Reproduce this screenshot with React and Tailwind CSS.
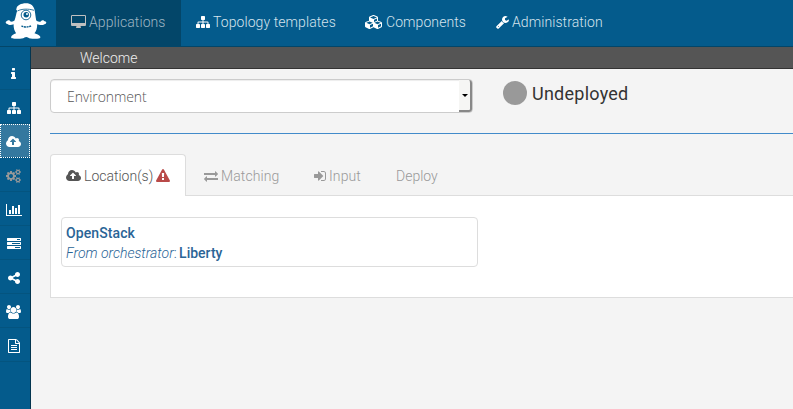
const GLYPHS = {
  desktop: { w: 15, vb: '-64 0 1920 1792', d: 'M1728 992v-832q0-13-9.5-22.5t-22.5-9.5h-1600q-13 0-22.5 9.5t-9.5 22.5v832q0 13 9.5 22.5t22.5 9.5h1600q13 0 22.5-9.5t9.5-22.5zm128-832v1088q0 66-47 113t-113 47h-544q0 37 16 77.5t32 71 16 43.5q0 26-19 45t-45 19h-512q-26 0-45-19t-19-45q0-14 16-44t32-70 16-78h-544q-66 0-113-47t-47-113v-1088q0-66 47-113t113-47h1600q66 0 113 47t47 113z' },
  sitemap: { w: 14, vb: '0 0 1792 1792', d: 'M1792 1248v320q0 40-28 68t-68 28h-320q-40 0-68-28t-28-68v-320q0-40 28-68t68-28h96v-192h-512v192h96q40 0 68 28t28 68v320q0 40-28 68t-68 28h-320q-40 0-68-28t-28-68v-320q0-40 28-68t68-28h96v-192h-512v192h96q40 0 68 28t28 68v320q0 40-28 68t-68 28h-320q-40 0-68-28t-28-68v-320q0-40 28-68t68-28h96v-192q0-52 38-90t90-38h512v-192h-96q-40 0-68-28t-28-68v-320q0-40 28-68t68-28h320q40 0 68 28t28 68v320q0 40-28 68t-68 28h-96v192h512q52 0 90 38t38 90v192h96q40 0 68 28t28 68z' },
  cubes: { w: 18, vb: '-128 0 2304 1792', d: 'M512 1632l384-192v-314l-384 164v342zm-64-454l404-173-404-173-404 173zm1088 454l384-192v-314l-384 164v342zm-64-454l404-173-404-173-404 173zm-448-293l384-165v-266l-384 164v267zm-64-379l441-189-441-189-441 189zm1088 518v416q0 36-19 67t-52 47l-448 224q-25 14-57 14t-57-14l-448-224q-5-2-7-4-2 2-7 4l-448 224q-25 14-57 14t-57-14l-448-224q-33-16-52-47t-19-67v-416q0-38 21.5-70t56.5-48l434-186v-400q0-38 21.5-70t56.5-48l448-192q23-10 50-10t50 10l448 192q35 16 56.5 48t21.5 70v400l434 186q36 16 57 48t21 70z' },
  wrench: { w: 13, vb: '64 0 1664 1792', d: 'M448 1472q0-26-19-45t-45-19-45 19-19 45 19 45 45 19 45-19 19-45zm644-420l-682 682q-37 37-90 37-52 0-91-37l-106-108q-38-36-38-90 0-53 38-91l681-681q39 98 114.5 173.5t173.5 114.5zm634-435q0 39-23 106-47 134-164.5 217.5t-258.5 83.5q-185 0-316.5-131.5t-131.5-316.5 131.5-316.5 316.5-131.5q58 0 121.5 16.5t107.5 46.5q16 11 16 28t-16 28l-293 169v224l193 107q5-3 79-48.5t135.5-81 70.5-35.5q15 0 23.5 10t8.5 25z' },
  info: { w: 5, vb: '576 0 640 1792', d: 'M1216 1344v128q0 26-19 45t-45 19h-512q-26 0-45-19t-19-45v-128q0-26 19-45t45-19h64v-384h-64q-26 0-45-19t-19-45v-128q0-26 19-45t45-19h384q26 0 45 19t19 45v576h64q26 0 45 19t19 45zm-128-1152v192q0 26-19 45t-45 19h-256q-26 0-45-19t-19-45v-192q0-26 19-45t45-19h256q26 0 45 19t19 45z' },
  cloud: { w: 15, vb: '-64 0 1920 1792', d: 'M1216 864q0-14-9-23l-352-352q-9-9-23-9t-23 9l-351 351q-10 12-10 24 0 14 9 23t23 9h224v352q0 13 9.5 22.5t22.5 9.5h192q13 0 22.5-9.5t9.5-22.5v-352h224q13 0 22.5-9.5t9.5-22.5zm640 288q0 159-112.5 271.5t-271.5 112.5h-1088q-185 0-316.5-131.5t-131.5-316.5q0-130 70-240t188-165q-2-30-2-43 0-212 150-362t362-150q156 0 285.5 87t188.5 231q71-62 166-62 106 0 181 75t75 181q0 76-41 138 130 31 213.5 135.5t83.5 238.5z' },
  cogs: { w: 15, vb: '-64 0 1920 1792', d: 'M832 896q0-106-75-181t-181-75-181 75-75 181 75 181 181 75 181-75 75-181zm768 512q0-52-38-90t-90-38-90 38-38 90q0 53 37.5 90.5t90.5 37.5 90.5-37.5 37.5-90.5zm0-1024q0-52-38-90t-90-38-90 38-38 90q0 53 37.5 90.5t90.5 37.5 90.5-37.5 37.5-90.5zm-384 421v185q0 10-7 19.5t-16 10.5l-155 24q-11 35-32 76 34 48 90 115 7 11 7 20 0 12-7 19-23 30-82.5 89.5t-78.5 59.5q-11 0-21-7l-115-90q-37 19-77 31-11 108-23 155-7 24-30 24h-186q-11 0-20-7.5t-10-17.5l-23-153q-34-10-75-31l-118 89q-7 7-20 7-11 0-21-8-144-133-144-160 0-9 7-19 10-14 41-53t47-61q-23-44-35-82l-152-24q-10-1-17-9.5t-7-19.5v-185q0-10 7-19.5t16-10.5l155-24q11-35 32-76-34-48-90-115-7-11-7-20 0-12 7-20 22-30 82-89t79-59q11 0 21 7l115 90q34-18 77-32 11-108 23-154 7-24 30-24h186q11 0 20 7.5t10 17.5l23 153q34 10 75 31l118-89q8-7 20-7 11 0 21 8 144 133 144 160 0 8-7 19-12 16-42 54t-45 60q23 48 34 82l152 23q10 2 17 10.5t7 19.5zm640 533v140q0 16-149 31-12 27-30 52 51 113 51 138 0 4-4 7-122 71-124 71-8 0-46-47t-52-68q-20 2-30 2t-30-2q-14 21-52 68t-46 47q-2 0-124-71-4-3-4-7 0-25 51-138-18-25-30-52-149-15-149-31v-140q0-16 149-31 13-29 30-52-51-113-51-138 0-4 4-7 4-2 35-20t59-34 30-16q8 0 46 46.5t52 67.5q20-2 30-2t30 2q51-71 92-112l6-2q4 0 124 70 4 3 4 7 0 25-51 138 17 23 30 52 149 15 149 31zm0-1024v140q0 16-149 31-12 27-30 52 51 113 51 138 0 4-4 7-122 71-124 71-8 0-46-47t-52-68q-20 2-30 2t-30-2q-14 21-52 68t-46 47q-2 0-124-71-4-3-4-7 0-25 51-138-18-25-30-52-149-15-149-31v-140q0-16 149-31 13-29 30-52-51-113-51-138 0-4 4-7 4-2 35-20t59-34 30-16q8 0 46 46.5t52 67.5q20-2 30-2t30 2q51-71 92-112l6-2q4 0 124 70 4 3 4 7 0 25-51 138 17 23 30 52 149 15 149 31z' },
  chart: { w: 16, vb: '0 0 2048 1792', d: 'M640 896v512h-256v-512h256zm384-512v1024h-256v-1024h256zm1024 1152v128h-2048v-1536h128v1408h1920zm-640-896v768h-256v-768h256zm384-384v1152h-256v-1152h256z' },
  tasks: { w: 14, vb: '0 0 1792 1792', d: 'M1024 1408h640v-128h-640v128zm-384-512h1024v-128h-1024v128zm640-512h384v-128h-384v128zm512 832v256q0 26-19 45t-45 19h-1664q-26 0-45-19t-19-45v-256q0-26 19-45t45-19h1664q26 0 45 19t19 45zm0-512v256q0 26-19 45t-45 19h-1664q-26 0-45-19t-19-45v-256q0-26 19-45t45-19h1664q26 0 45 19t19 45zm0-512v256q0 26-19 45t-45 19h-1664q-26 0-45-19t-19-45v-256q0-26 19-45t45-19h1664q26 0 45 19t19 45z' },
  share: { w: 12, vb: '128 0 1536 1792', d: 'M1344 1024q133 0 226.5 93.5t93.5 226.5-93.5 226.5-226.5 93.5-226.5-93.5-93.5-226.5q0-12 2-34l-360-180q-92 86-218 86-133 0-226.5-93.5t-93.5-226.5 93.5-226.5 226.5-93.5q126 0 218 86l360-180q-2-22-2-34 0-133 93.5-226.5t226.5-93.5 226.5 93.5 93.5 226.5-93.5 226.5-226.5 93.5q-126 0-218-86l-360 180q2 22 2 34t-2 34l360 180q92-86 218-86z' },
  users: { w: 15, vb: '-64 0 1920 1792', d: 'M529 896q-162 5-265 128h-134q-82 0-138-40.5t-56-118.5q0-353 124-353 6 0 43.5 21t97.5 42.5 119 21.5q67 0 133-23-5 37-5 66 0 139 81 256zm1071 637q0 120-73 189.5t-194 69.5h-874q-121 0-194-69.5t-73-189.5q0-53 3.5-103.5t14-109 26.5-108.5 43-97.5 62-81 85.5-53.5 111.5-20q10 0 43 21.5t73 48 107 48 135 21.5 135-21.5 107-48 73-48 43-21.5q61 0 111.5 20t85.5 53.5 62 81 43 97.5 26.5 108.5 14 109 3.5 103.5zm-1024-1277q0 106-75 181t-181 75-181-75-75-181 75-181 181-75 181 75 75 181zm704 384q0 159-112.5 271.5t-271.5 112.5-271.5-112.5-112.5-271.5 112.5-271.5 271.5-112.5 271.5 112.5 112.5 271.5zm576 225q0 78-56 118.5t-138 40.5h-134q-103-123-265-128 81-117 81-256 0-29-5-66 66 23 133 23 59 0 119-21.5t97.5-42.5 43.5-21q124 0 124 353zm-128-609q0 106-75 181t-181 75-181-75-75-181 75-181 181-75 181 75 75 181z' },
  file: { w: 12, vb: '128 0 1536 1792', d: 'M1596 380q28 28 48 76t20 88v1152q0 40-28 68t-68 28h-1344q-40 0-68-28t-28-68v-1600q0-40 28-68t68-28h896q40 0 88 20t76 48zm-444-244v376h376q-10-29-22-41l-313-313q-12-12-41-22zm384 1528v-1024h-416q-40 0-68-28t-28-68v-416h-768v1536h1280zm-1024-864q0-14 9-23t23-9h704q14 0 23 9t9 23v64q0 14-9 23t-23 9h-704q-14 0-23-9t-9-23v-64zm736 224q14 0 23 9t9 23v64q0 14-9 23t-23 9h-704q-14 0-23-9t-9-23v-64q0-14 9-23t23-9h704zm0 256q14 0 23 9t9 23v64q0 14-9 23t-23 9h-704q-14 0-23-9t-9-23v-64q0-14 9-23t23-9h704z' },
  warning: { w: 14, vb: '0 0 1792 1792', d: 'M1024 1375v-190q0-14-9.5-23.5t-22.5-9.5h-192q-13 0-22.5 9.5t-9.5 23.5v190q0 14 9.5 23.5t22.5 9.5h192q13 0 22.5-9.5t9.5-23.5zm-2-374l18-459q0-12-10-19-13-11-24-11h-220q-11 0-24 11-10 7-10 21l17 457q0 10 10 16.5t24 6.5h185q14 0 23.5-6.5t10.5-16.5zm-14-934l768 1408q35 63-2 126-17 29-46.5 46t-63.5 17h-1536q-34 0-63.5-17t-46.5-46q-37-63-2-126l768-1408q17-31 47-49t65-18 65 18 47 49z' },
  exchange: { w: 14, vb: '0 0 1792 1792', d: 'M1792 1184v192q0 13-9.5 22.5t-22.5 9.5h-1376v192q0 13-9.5 22.5t-22.5 9.5q-12 0-24-10l-319-320q-9-9-9-22 0-14 9-23l320-320q9-9 23-9 13 0 22.5 9.5t9.5 22.5v192h1376q13 0 22.5 9.5t9.5 22.5zm0-544q0 14-9 23l-320 320q-9 9-23 9-13 0-22.5-9.5t-9.5-22.5v-192h-1376q-13 0-22.5-9.5t-9.5-22.5v-192q0-13 9.5-22.5t22.5-9.5h1376v-192q0-14 9-23t23-9q12 0 24 10l319 319q9 9 9 23z' },
  signIn: { w: 12, vb: '128 0 1536 1792', d: 'M1312 896q0 26-19 45l-544 544q-19 19-45 19t-45-19-19-45v-288h-448q-26 0-45-19t-19-45v-384q0-26 19-45t45-19h448v-288q0-26 19-45t45-19 45 19l544 544q19 19 19 45zm352-352v704q0 119-84.5 203.5t-203.5 84.5h-320q-13 0-22.5-9.5t-9.5-22.5q0-4-1-20t-.5-26.5 3-23.5 10-19.5 20.5-6.5h320q66 0 113-47t47-113v-704q0-66-47-113t-113-47h-312l-11.5-1-11.5-3-8-5.5-7-9-2-13.5q0-4-1-20t-.5-26.5 3-23.5 10-19.5 20.5-6.5h320q119 0 203.5 84.5t84.5 203.5z' },
};

function Icon({ name, className = '' }) {
  const g = GLYPHS[name];
  return (
    <svg width={g.w} height="14" viewBox={g.vb} fill="currentColor" className={`inline-block shrink-0 ${className}`}>
      <path d={g.d} />
    </svg>
  );
}

function Logo() {
  return (
    <svg width="56" height="46" viewBox="0 0 56 46" className="shrink-0">
      <path
        fill="#fff"
        d="M16.500 8.500C17 5.500 21 3.300 26 3.300c4.800 0 7.700 2.700 8.600 6.700.6 3 .9 6.500 1.600 10.300 1.300 1.500 3 1.700 4.600 1.100.8-1.300 2.300-1.500 3.200-.7.300.6 1 .7 1.700.9 1 .6.6 2-.4 2.300-1.300.3-2 1.200-3.500 1.200-2 .1-3.400-.3-4.600-.8 0 4-.9 7-2.700 8.900 2.600.8 5.300 2 5.800 3.600.4 1.500-1 1.900-3 1.900-3.300.1-7.500.3-9.300-1.200-.9-.7-2.600-.7-3.500 0-1.900 1.400-5.200 1.200-8.500 1.200-2.500 0-4.900.2-4.900-1.400 0-1.700 2.500-3.200 5-4-1.800-2.500-2.600-5.300-2.500-9-1.200.5-2.600.8-4 .7-1.300-.2-1.800-1-2.800-1.300-1.100-.3-1.500-1.600-.6-2.300.8-.4 1.200-.9 2-1.100 1-.2 1.700.4 2.300 1.200 1.500.4 3 0 4-1 1.300-3.500 1.600-6.500 2.700-9.700-.8-.5-1.300-1.300-.7-2.300z"
      />
      <path d="M17.500 11c4-2.300 11-2.400 16.500-.7" fill="none" stroke="#045b8c" strokeWidth=".8" />
      <circle cx="26" cy="15" r="4.800" fill="#fff" stroke="#045b8c" strokeWidth=".9" />
      <circle cx="26.200" cy="14.800" r="2.700" fill="#045b8c" />
      <circle cx="27" cy="13.900" r="1" fill="#fff" />
      <path d="M21.500 25.800c2.600 1.600 7 1.600 10-.3" fill="none" stroke="#045b8c" strokeWidth="1.400" strokeDasharray="2 .6" />
    </svg>
  );
}

const NAV = [
  ['desktop', 'Applications', 'w-[125px] bg-[#034669] border-r border-[#034669] text-[#9fb5c3]'],
  ['sitemap', 'Topology templates', 'w-[169px] text-[#d5e3ec]'],
  ['cubes', 'Components', 'w-[131px] text-[#d5e3ec]'],
  ['wrench', 'Administration', 'w-[137px] text-[#d5e3ec]'],
];
const SIDE = ['info', 'sitemap', 'cloud', 'cogs', 'chart', 'tasks', 'share', 'users', 'file'];

export default function App() {
  return (
    <div className="flex h-[409px] w-[793px] flex-col overflow-hidden bg-[#f4f4f4] font-['Roboto',sans-serif] text-sm leading-5 font-light">
      <header className="flex h-[47px] shrink-0 border-b border-[#034669] bg-[#045b8c]">
        <Logo />
        {NAV.map(([icon, label, cls]) => (
          <a key={label} className={`flex items-center gap-[3px] pb-[3px] pl-[15px] tracking-[0.08px] whitespace-nowrap ${cls}`}>
            <Icon name={icon} className={icon === 'desktop' ? 'text-[#c0c0c0]' : 'text-white'} />
            <span>{label}</span>
          </a>
        ))}
      </header>
      <div className="flex min-h-0 flex-1">
        <aside className="flex w-[31px] shrink-0 flex-col border-r border-[#03354f] bg-[#045b8c] pt-[9px]">
          {SIDE.map((name) => (
            <div
              key={name}
              className={`flex h-[34px] items-center justify-center border-b border-[#04547f] pt-[2px] pr-[3px] ${
                name === 'cloud' ? 'bg-[#34789f] outline-1 -outline-offset-1 outline-dotted outline-white' : ''
              } ${name === 'cogs' ? 'text-[#999]' : 'text-white'}`}
            >
              <Icon name={name} />
            </div>
          ))}
        </aside>
        <main className="flex min-w-0 flex-1 flex-col">
          <div className="h-[22px] shrink-0 border-b border-[#333] bg-[#555] pt-px pl-[49px] text-[#eee]">Welcome</div>
          <div className="flex flex-col pt-[10px] pl-[19px]">
            <div className="flex h-[34px]">
              <div className="flex w-[423px] items-center justify-between rounded-[4px] border border-[#ccc] bg-white pl-4 font-['Open_Sans',sans-serif] text-[#555] shadow-[inset_0_1px_1px_rgba(0,0,0,0.075)]">
                <span className="pt-[2px] tracking-[-0.08px]">Environment</span>
                <span className="flex h-full w-[13px] items-center justify-center rounded-r-[3px] border-r-2 border-b-2 border-[#888] bg-[#f6f6f4]">
                  <svg width="6" height="3" viewBox="0 0 6 3"><path d="M0 0h6L3 3z" /></svg>
                </span>
              </div>
              <div className="flex h-7 items-center gap-[5px] pl-[30px] text-lg font-normal text-[#333]">
                <span className="size-6 rounded-full bg-[#999]" />
                <span className="pt-[2px] tracking-[0.25px]">Undeployed</span>
              </div>
            </div>
            <div className="mt-5 h-px bg-[#428bca]" />
            <div className="mt-5 flex h-[42px] border-b border-[#ddd] text-[#999]">
              <div className="-mb-px flex w-[136px] items-center gap-[3px] rounded-t-[4px] border border-b-0 border-[#ddd] bg-white pl-[15px] pt-px text-[#555]">
                <Icon name="cloud" />
                <span>Location(s)</span>
                <Icon name="warning" className="text-[#b94a48]" />
              </div>
              <div className="flex w-[110px] items-center gap-[3px] pt-[2px] pl-[18px]"><Icon name="exchange" /><span className="tracking-[0.1px]">Matching</span></div>
              <div className="flex w-[82px] items-center gap-[3px] pt-[2px] pl-[18px]"><Icon name="signIn" /><span className="tracking-[0.1px]">Input</span></div>
              <div className="flex items-center pt-[2px] pl-[18px]">Deploy</div>
            </div>
            <div className="h-[102px] border-b border-l border-[#ddd] bg-white pt-[21px] pl-[10px]">
              <div className="h-[50px] w-[417px] rounded-[4px] border border-[#ddd] pt-[5px] pl-1 text-[#2a6496]">
                <div className="font-medium tracking-[0.1px]">OpenStack</div>
                <div><span className="italic">From orchestrator</span>: <span className="-ml-px font-medium">Liberty</span></div>
              </div>
            </div>
          </div>
        </main>
      </div>
    </div>
  );
}
